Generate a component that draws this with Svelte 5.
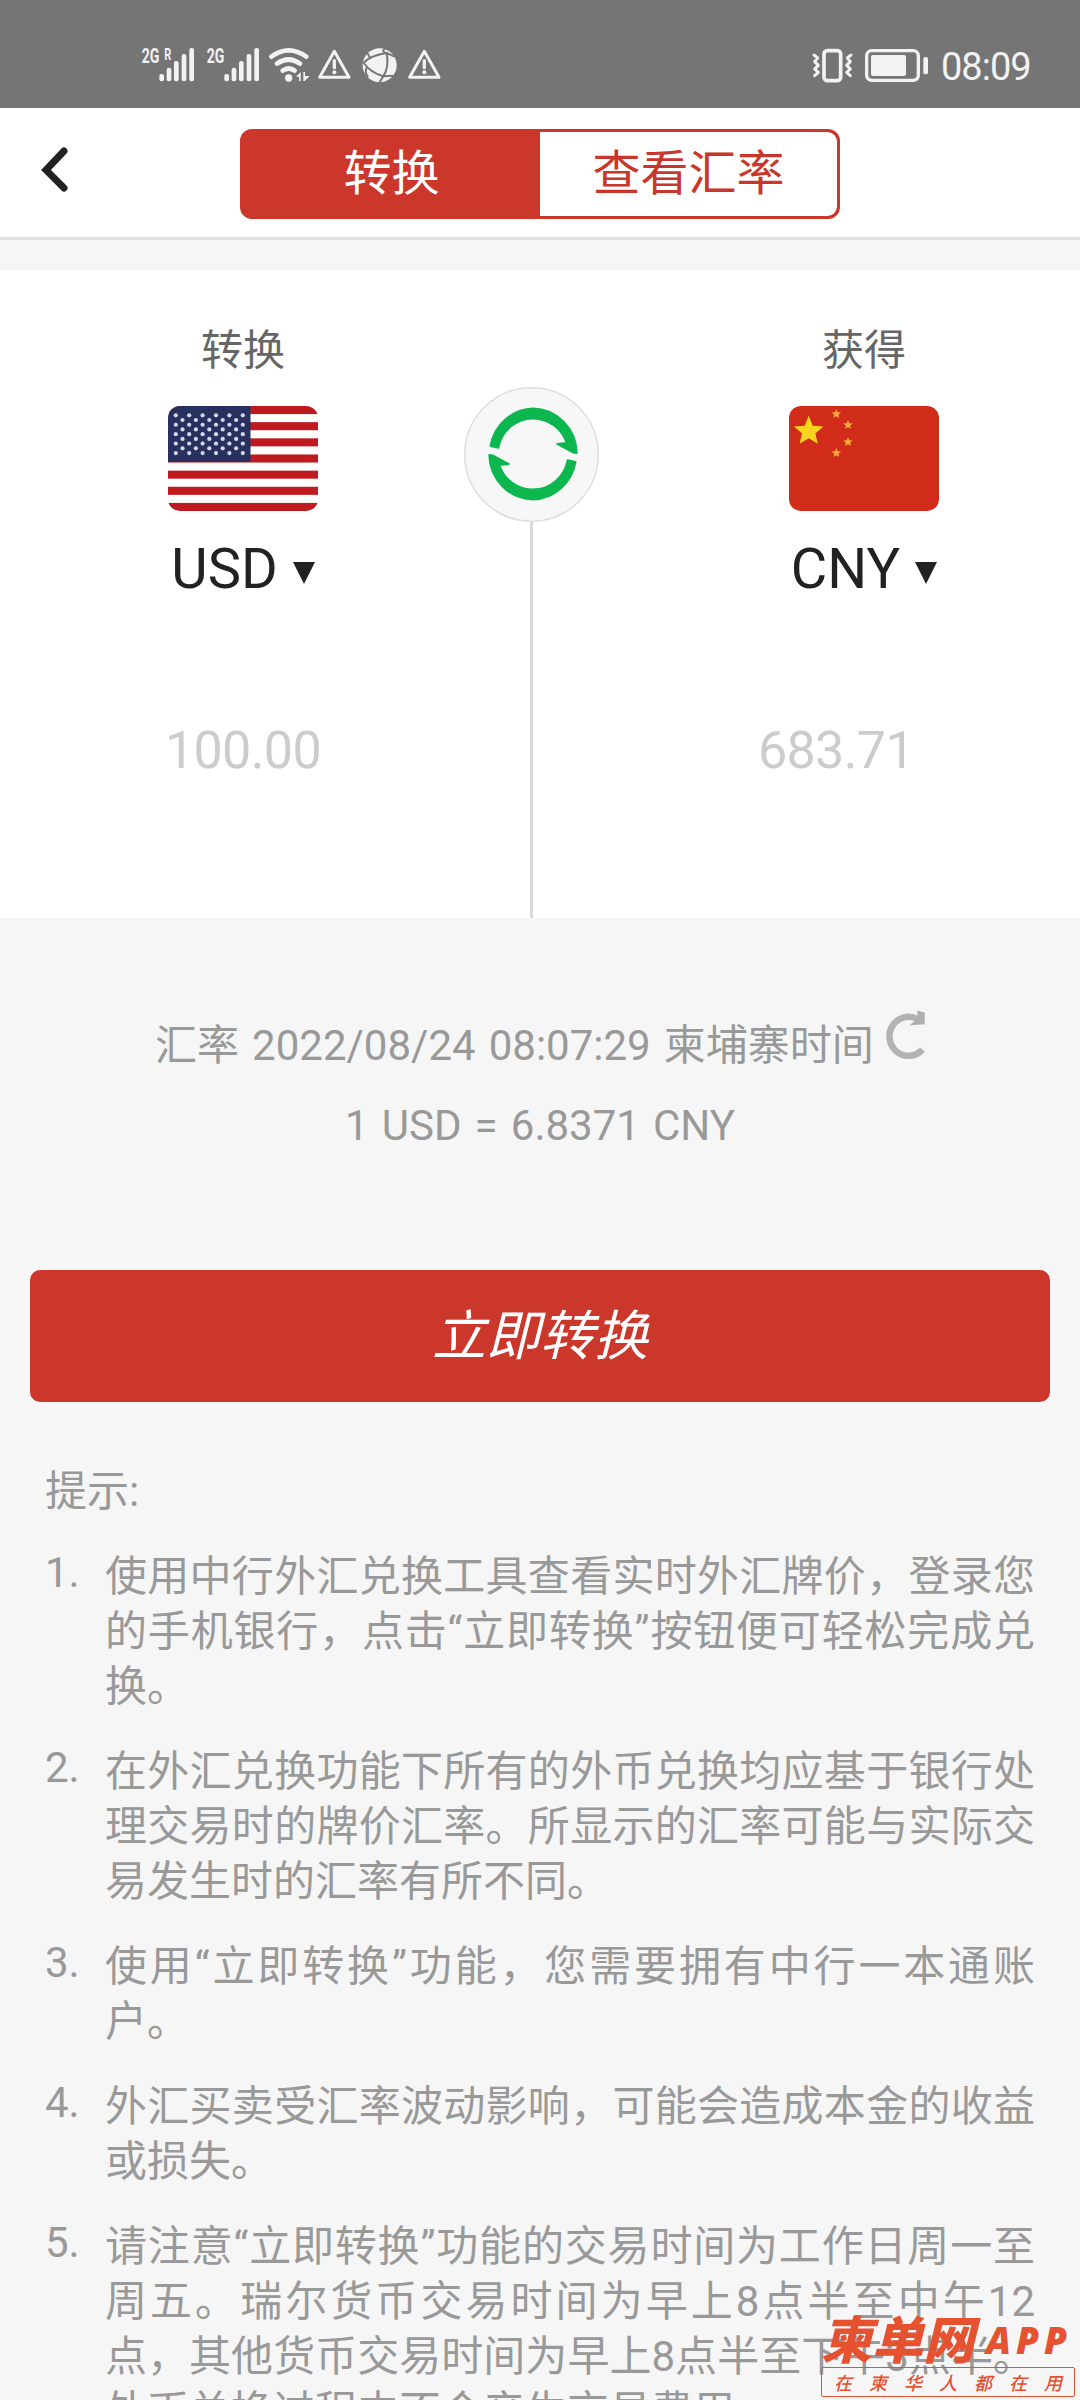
<script>
  const bars = [
    [0, 132], [22, 113], [44, 93], [67, 72], [90, 54]
  ];

  const stripes = Array.from({ length: 7 }, (_, i) => i * 2);
  const usStars = [];
  for (let row = 0; row < 9; row++) {
    const odd = row % 2;
    for (let col = 0; col < (odd ? 5 : 6); col++) {
      usStars.push([7.8 + odd * 6.7 + col * 13.4, 9.3 + row * 4.72]);
    }
  }

  function star(cx, cy, r) {
    const pts = [];
    for (let i = 0; i < 10; i++) {
      const a = (Math.PI / 5) * i - Math.PI / 2;
      const q = i % 2 ? r * 0.45 : r;
      pts.push(`${(cx + q * Math.cos(a)).toFixed(2)},${(cy + q * Math.sin(a)).toFixed(2)}`);
    }
    return pts.join(' ');
  }
  const cnStars = [[19.7, 25.3, 15.5], [47.3, 8, 5], [59, 19, 5], [59, 36, 5], [47.3, 47, 5]];

  const arrow = 'M26.4 59A44.5 45.5 0 0 1 69 21.5A44.5 45.5 0 0 1 112.8 66L109 65.5L93.2 57L102.6 56A35.4 36 0 0 0 69 31.5A35.4 36 0 0 0 34.4 60.8Z';

  const tips = [
    ['使用中行外汇兑换工具查看实时外汇牌价，登录您', '的手机银行，点击“立即转换”按钮便可轻松完成兑', '换。'],
    ['在外汇兑换功能下所有的外币兑换均应基于银行处', '理交易时的牌价汇率。所显示的汇率可能与实际交', '易发生时的汇率有所不同。'],
    ['使用“立即转换”功能，您需要拥有中行一本通账', '户。'],
    ['外汇买卖受汇率波动影响，可能会造成本金的收益', '或损失。'],
    ['请注意“立即转换”功能的交易时间为工作日周一至', '周五。瑞尔货币交易时间为早上8点半至中午12', '点，其他货币交易时间为早上8点半至下午3点半。', '外币兑换过程中不会产生交易费用。']
  ];
</script>

<div class="screen">
  <div class="status">
    <svg class="status-left" viewBox="0 0 1020 210">
      <g class="net">
        <text x="65" y="98" font-size="60" textLength="53" lengthAdjust="spacingAndGlyphs">2G</text>
        <text x="133" y="89" font-size="48" textLength="21" lengthAdjust="spacingAndGlyphs">R</text>
        <text x="260" y="98" font-size="60" textLength="53" lengthAdjust="spacingAndGlyphs">2G</text>
      </g>
      {#each [118, 313] as base}
        {#each bars as [dx, top]}
          <rect x={base + dx} y={top} width="14" height={154 - top} rx="6" />
        {/each}
      {/each}
      <g class="line" stroke-width="14">
        <path d="M454 80Q506 42 559 80" />
        <path d="M471 101Q506 76 540 101" />
        <path d="M488 122Q506 109 524 122" />
      </g>
      <circle cx="506" cy="144" r="11" />
      <path d="M528 140l14-14v27h-5v-13zM550 126h5v12h14l-15 15h-4z" />
      {#each [643, 913] as cx}
        <path class="line" stroke-width="9" d="M{cx} 64L{cx + 44} 142H{cx - 44}Z" />
        <path class="line" stroke-width="10" d="M{cx} 92V113" />
        <circle cx={cx} cy="127" r="6" />
      {/each}
      <circle cx="779" cy="106" r="51" />
      <g class="cut">
        <path d="M730 99Q752 76 800 69L824 80" />
        <path d="M794 56Q782 66 800 69Q808 110 790 139" />
        <path d="M731 99Q752 128 790 139L820 137" />
        <path d="M742 110Q732 125 744 142" />
        <path d="M790 139L778 158" />
        <path d="M752 86L742 70" />
      </g>
    </svg>
    <div class="status-right">
      <svg class="battery" viewBox="0 0 450 210">
        <g class="line">
          <rect x="132" y="62" width="50" height="90" rx="10" stroke-width="11" />
          <path stroke-width="9" d="M102 75l11 9-9 11 11 11-11 11 11 10-11 10M213 75l-11 9 9 11-11 11 11 11-11 10 11 10" />
          <rect x="260" y="62" width="155" height="89" rx="15" stroke-width="10" />
        </g>
        <rect x="273" y="75" width="105" height="63" rx="6" />
        <rect x="430" y="81" width="14" height="52" rx="6" />
      </svg>
      <span class="clock">08:09</span>
    </div>
  </div>

  <header class="header">
    <svg class="back" viewBox="0 0 30 48"><path d="M24 5L6 24L24 42" /></svg>
    <div class="tabs">
      <div class="tab active">转换</div>
      <div class="tab">查看汇率</div>
    </div>
  </header>

  <section class="card">
    <div class="side from">
      <div class="label">转换</div>
      <svg class="flag" viewBox="0 0 150 105">
        <rect width="150" height="105" fill="#fff" />
        {#each stripes as s}
          <rect y={s * 8.077} width="150" height="8.077" fill="#be1a20" />
        {/each}
        <rect width="82.5" height="56" fill="#28305f" />
        {#each usStars as [x, y]}
          <circle cx={x} cy={y} r="2.1" fill="#d4d8ea" />
        {/each}
      </svg>
      <div class="code">USD<i class="caret"></i></div>
      <div class="amount">100.00</div>
    </div>
    <div class="middle">
      <svg class="swap" viewBox="0 0 135 135">
        <circle cx="67.5" cy="67.5" r="66.7" fill="#f7f7f7" stroke="#dedede" stroke-width="1.5" />
        <g fill="#0db74f" stroke="#0db74f" stroke-width="1.8" stroke-linejoin="round">
          <path d={arrow} />
          <path transform="rotate(180 69 67)" d={arrow} />
        </g>
      </svg>
      <div class="divider"></div>
    </div>
    <div class="side to">
      <div class="label">获得</div>
      <svg class="flag" viewBox="0 0 150 105">
        <rect width="150" height="105" fill="#d02c19" />
        {#each cnStars as [x, y, r], i}
          <polygon points={star(x, y, r)} fill={i ? '#f9a83c' : '#fbd420'} />
        {/each}
      </svg>
      <div class="code">CNY<i class="caret"></i></div>
      <div class="amount">683.71</div>
    </div>
  </section>

  <section class="rate">
    <div class="rate-line">
      <span class="stamp">汇率 2022/08/24 08:07:29 柬埔寨时间</span>
      <svg class="refresh" viewBox="0 0 39 52">
        <path class="arc" d="M36.5 39.5A19 19.5 0 1 1 32 9.5" />
        <path class="head" d="M25.5 14.5L38 13.5L38 3L32 1.5L32 9Z" />
      </svg>
    </div>
    <div class="rate-value">1 USD = 6.8371 CNY</div>
  </section>

  <button class="convert">立即转换</button>

  <section class="tips">
    <div class="tips-title">提示:</div>
    <ol>
      {#each tips as lines, n}
        <li>
          <span class="num">{n + 1}.</span>
          <div class="body">
            {#each lines as line, i}
              <div class="row" class:full={i < lines.length - 1}>{line}</div>
            {/each}
          </div>
        </li>
      {/each}
    </ol>
  </section>

  <div class="mark">
    <div class="brand"><span class="brand-cn">柬单网</span><span class="brand-app">APP</span></div>
    <div class="slogan">{#each '在柬华人都在用' as ch}<span>{ch}</span>{/each}</div>
  </div>
</div>

<style>
  :global(body) { background: #f6f6f6; }
  .screen {
    position: relative;
    width: 1080px;
    height: 2400px;
    overflow: hidden;
    background: #f6f6f6;
    font-family: Roboto, 'Noto Sans CJK SC', sans-serif;
    color: #999;
  }
  .status {
    display: flex;
    justify-content: space-between;
    box-sizing: border-box;
    height: 108px;
    padding: 30px 50px 0 120px;
    background: #757575;
  }
  .status svg { height: 70px; fill: #f2f2f2; }
  .status-left { width: 340px; }
  .status-right { display: flex; width: 250px; }
  .battery { width: 150px; flex: none; }
  .net { font-family: Roboto, sans-serif; font-weight: 700; }
  .line { fill: none; stroke: #f2f2f2; stroke-linecap: round; stroke-linejoin: round; }
  .cut { fill: none; stroke: #757575; stroke-width: 6; }
  .clock {
    margin-left: 11px;
    font-size: 38px;
    letter-spacing: -1px;
    line-height: 75px;
    color: #f2f2f2;
    white-space: nowrap;
  }

  .header {
    display: flex;
    align-items: flex-start;
    box-sizing: border-box;
    height: 132px;
    padding: 21px 0 0 40px;
    background: #fff;
    border-bottom: 3px solid #e1e1e1;
  }
  .back { width: 30px; height: 48px; margin-top: 17px; }
  .back path { fill: none; stroke: #222; stroke-width: 7; stroke-linecap: round; stroke-linejoin: miter; }
  .tabs {
    display: flex;
    box-sizing: border-box;
    width: 600px;
    height: 90px;
    margin-left: 170px;
    border: 3px solid #cb372b;
    border-radius: 12px;
    background: #cb372b;
    overflow: hidden;
  }
  .tab {
    flex: 1;
    text-align: center;
    font-size: 48px;
    line-height: 84px;
    color: #c9372c;
    background: #fff;
    border-radius: 0 9px 9px 0;
  }
  .tab.active { background: #cb372b; color: #fff; }

  .card {
    display: grid;
    grid-template-columns: 464px 135px 1fr;
    height: 648px;
    margin-top: 30px;
    background: #fff;
  }
  .side { display: flex; flex-direction: column; align-items: center; padding-top: 49px; }
  .from { padding-left: 22px; }
  .to { padding-left: 49px; }
  .label { font-size: 42px; line-height: 64px; color: #666; }
  .flag { width: 150px; height: 105px; margin-top: 23px; border-radius: 12px; }
  .code {
    display: flex;
    align-items: center;
    margin-top: 20px;
    font-size: 56px;
    line-height: 76px;
    color: #222;
  }
  .caret {
    margin: 7px 0 0 15px;
    border: 11.5px solid transparent;
    border-top: 22px solid #222;
    border-bottom: 0;
  }
  .amount { margin-top: 105px; font-size: 52px; line-height: 78px; letter-spacing: -0.6px; color: #ccc; }
  .to .amount { margin-right: 56px; }
  .middle { display: flex; flex-direction: column; align-items: center; padding-top: 117px; }
  .swap { width: 135px; height: 135px; }
  .divider { flex: 1; width: 3px; background: #d8d8d8; }

  .rate { display: flex; flex-direction: column; padding-top: 88px; font-size: 42px; word-spacing: 2.7px; }
  .rate-line { display: flex; margin-left: 155px; height: 80px; line-height: 80px; white-space: nowrap; }
  .refresh { width: 39px; height: 52px; margin: 4px 0 0 12px; filter: blur(0.7px); }
  .arc { fill: none; stroke: #b3b3b3; stroke-width: 6.5; }
  .head { fill: #b0b0b0; stroke: #b0b0b0; stroke-width: 1.5; }
  .rate-value { height: 76px; text-align: center; line-height: 80px; }

  .convert {
    display: block;
    width: 1020px;
    height: 132px;
    margin: 108px 30px 0;
    padding: 0 0 8px;
    border: 0;
    border-radius: 10px;
    background: #cb372b;
    color: #fff;
    font: italic 400 54px/120px 'Noto Sans CJK SC', sans-serif;
  }

  .tips { padding: 60px 45px 0; font-size: 42px; line-height: 55px; }
  .tips-title { height: 87px; line-height: 60px; }
  ol { display: flex; flex-direction: column; gap: 30px; margin: 0; padding: 0; list-style: none; }
  li { display: flex; }
  .num { flex: none; width: 60px; margin-top: -4px; }
  .body { width: 930px; flex: none; }
  .row { height: 55px; white-space: nowrap; }
  .full { text-align: justify; text-align-last: justify; }

  .mark { position: absolute; left: 821px; top: 2311px; width: 254px; color: #e65130; }
  .brand { display: flex; height: 56px; white-space: nowrap; }
  .brand-cn { font: italic 900 51px/52px 'Noto Sans CJK SC', sans-serif; }
  .brand-app { margin-left: 12px; font: italic 800 37px/58px 'Open Sans', sans-serif; letter-spacing: 5px; }
  .slogan {
    display: flex;
    justify-content: space-between;
    box-sizing: border-box;
    height: 30px;
    padding: 0 12px;
    border: 1px solid #e65130;
    border-radius: 2px;
    font: italic 500 18px/28px 'Noto Sans CJK SC', sans-serif;
  }
</style>
